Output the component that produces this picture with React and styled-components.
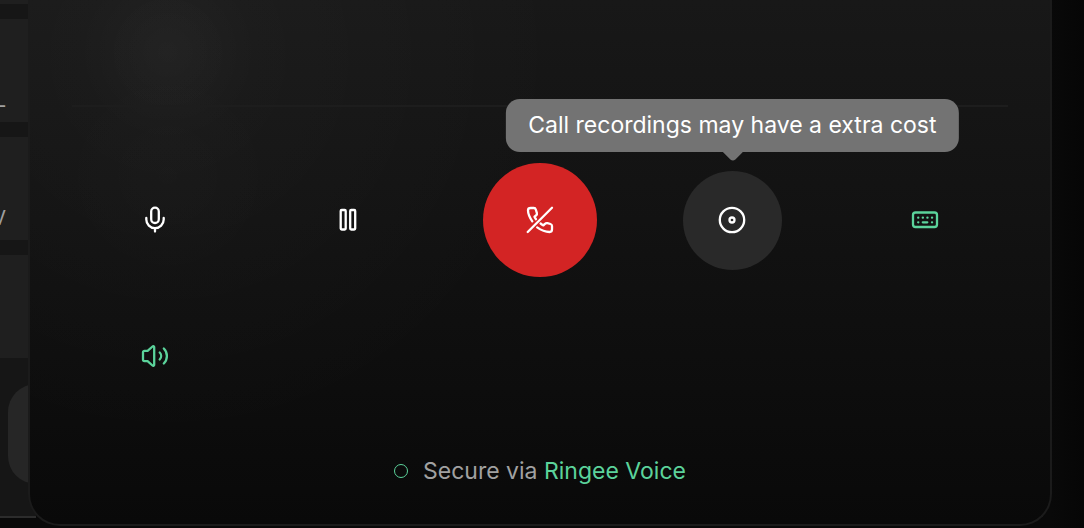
import React from 'react'
import styled, { createGlobalStyle, css } from 'styled-components'

const GlobalStyle = createGlobalStyle`
    * {
        box-sizing: border-box;
    }

    body {
        margin: 0;
        overflow: hidden;
        background-color: #050505;
        color: white;
        font-family: Inter, 'Liberation Sans', sans-serif;
    }
`

const Container = styled.div`
    height: 100vh;
    display: grid;
    grid-template-columns: 28px minmax(0, 1fr) 32px;
    align-items: start;
    overflow: hidden;
    background: linear-gradient(90deg, #090909 97%, #060606);
`

/* runs a little under the dialog so that its rounded corner shows it */
const Sidebar = styled.div`
    width: calc(100% + 8px);
    height: 518px;
    display: flex;
    flex-direction: column;
    gap: 15px;
    overflow: hidden;
    background-color: #161616;
    border-bottom: 2px solid #2c2c2c;

    .strip {
        height: 4px;
        flex-shrink: 0;
        background-color: #1f1f1f;
    }
`

const SidebarRow = styled.div`
    height: 103px;
    flex-shrink: 0;
    display: flex;
    justify-content: flex-end;
    align-items: flex-end;
    padding: 0 30px 10px 0;
    background-color: #1f1f1f;
    color: #a0a0a0;
    font-size: 20px;
    line-height: 24px;
`

const SidebarPill = styled.div`
    width: 100px;
    height: 100px;
    flex-shrink: 0;
    margin: 11px 0 0 8px;
    border-radius: 28px;
    background-color: #262626;
`

const Dialog = styled.main`
    position: relative;
    height: 526px;
    display: flex;
    flex-direction: column;
    border: 2px solid #1b1b1b;
    border-top: none;
    border-radius: 0 0 32px 32px;
    background:
        radial-gradient(circle 90px at 138px 52px, #ffffff07, transparent),
        radial-gradient(circle 110px at 138px 175px, #ffffff03, transparent),
        radial-gradient(circle 400px at 138px 52px, #ffffff07, transparent),
        linear-gradient(#181818, #121212 42%, #090909);

    .divider {
        width: calc(100% - 84px);
        height: 2px;
        margin: 105px auto 0;
        border: none;
        background-color: #1d1d1d;
    }
`

const Controls = styled.div`
    display: grid;
    grid-template-columns: repeat(5, minmax(0, 1fr));
    grid-template-rows: 114px 114px;
    row-gap: 22px;
    place-items: center;
    padding: 56px 29px 0;
`

const variants = {
    plain: css`
        background-color: transparent;
        color: white;
    `,
    accent: css`
        background-color: transparent;
        color: #5bd39b;
    `,
    active: css`
        background-color: #292929;
        color: white;
    `,
    danger: css`
        width: 114px;
        height: 114px;
        background-color: #d32424;
        color: white;
    `,
}

const ControlButton = styled.button`
    width: 99px;
    height: 99px;
    display: flex;
    justify-content: center;
    align-items: center;
    padding: 0;
    border: none;
    border-radius: 50%;
    cursor: pointer;
    ${({ $variant }) => variants[$variant]}

    svg {
        width: 28px;
        height: 28px;
        overflow: visible;
    }
`

const TooltipAnchor = styled.div`
    position: relative;
    display: flex;
`

const Tooltip = styled.div`
    position: absolute;
    bottom: calc(100% + 19px);
    left: 50%;
    transform: translateX(-50%);
    padding: 12px 22px;
    border-radius: 14px;
    background-color: #737373;
    font-size: 23px;
    line-height: 29px;
    white-space: nowrap;

    svg {
        position: absolute;
        top: 100%;
        left: 50%;
        width: 20px;
        height: 9px;
        margin-left: -10px;
        fill: #737373;
    }
`

const Footer = styled.footer`
    display: flex;
    justify-content: center;
    align-items: center;
    gap: 15px;
    margin-top: 42px;
    color: #a1a1a1;
    font-size: 23px;
    line-height: 32px;

    .dot {
        width: 14px;
        height: 14px;
        border: 1px solid #5bd39b;
        border-radius: 50%;
    }

    .brand {
        color: #5bd39b;
    }
`

const Icon = ({ children }) => (
    <svg viewBox="0 0 28 28" fill="none" stroke="currentColor" strokeWidth="2.3" strokeLinecap="round" strokeLinejoin="round" aria-hidden="true">
        {children}
    </svg>
)

const MicIcon = () => (
    <Icon>
        <rect x="10.2" y="1.7" width="7.600" height="15.300" rx="3.800" />
        <path d="M5.300 12v1.500a8.700 8.700 0 0 0 17.400 0V12M14 22.200v3.300" />
    </Icon>
)

const PauseIcon = () => (
    <Icon>
        <rect x="6.700" y="4" width="5" height="19.500" rx="1" />
        <rect x="16.200" y="4" width="5" height="19.500" rx="1" />
    </Icon>
)

const HangUpIcon = () => (
    <Icon>
        <path d="M26 1.700 1.700 26" />
        <path d="M6.300 15.400C3.800 11.800 2 7.700 2 4.300 2 2.800 3.200 2 4.700 2h3.100c1 0 1.700.5 2 1.500l1.100 3.600c.3 1-.1 1.800-.9 2.400l-1.500 1.200c.4 1 .9 1.700 1.500 2.500" />
        <path d="M14.600 17.500c1 .8 1.900 1.500 2.800 1.900l1.500-1.500c.7-.8 1.500-1 2.500-.8l3.100.9c1 .3 1.500 1 1.500 2v3.300c0 1.600-.9 2.700-2.400 2.700-4.100 0-8.600-1.800-12.400-4.600" />
    </Icon>
)

const RecordIcon = () => (
    <Icon>
        <circle cx="14" cy="14" r="12.200" />
        <circle cx="14" cy="14" r="2.500" />
    </Icon>
)

const KeyboardIcon = () => (
    <Icon>
        <rect x="2" y="6.500" width="24" height="14.500" rx="2.500" />
        <path d="M7.200 11.700h.1M11.800 11.700h.1M16.400 11.700h.1M21 11.700h.1M7.200 16.300h.1M11.800 16.300h4.500M21 16.300h.1" />
    </Icon>
)

const SpeakerIcon = () => (
    <Icon>
        <path d="M2 10.200v7.600c0 .8.600 1.300 1.400 1.300h3.200l4.900 4.400c.8.700 1.700.3 1.700-.7V5.200c0-1-.9-1.400-1.700-.7L6.600 8.900H3.400C2.600 8.900 2 9.400 2 10.200z" />
        <path d="M18.700 10.500a5 5 0 0 1 0 7M22.800 6.500a10.600 10.600 0 0 1 0 15" />
    </Icon>
)

export default function App() {
    return (
        <>
            <GlobalStyle />
            <Container>
                <Sidebar>
                    <div className='strip' />
                    <SidebarRow>L</SidebarRow>
                    <SidebarRow>V</SidebarRow>
                    <SidebarRow />
                    <SidebarPill />
                </Sidebar>
                <Dialog>
                    <hr className='divider' />
                    <Controls>
                        <ControlButton $variant='plain' aria-label='Mute'>
                            <MicIcon />
                        </ControlButton>
                        <ControlButton $variant='plain' aria-label='Hold'>
                            <PauseIcon />
                        </ControlButton>
                        <ControlButton $variant='danger' aria-label='Hang up'>
                            <HangUpIcon />
                        </ControlButton>
                        <TooltipAnchor>
                            <ControlButton $variant='active' aria-label='Record' aria-describedby='record-tip'>
                                <RecordIcon />
                            </ControlButton>
                            <Tooltip id='record-tip' role='tooltip'>
                                Call recordings may have a extra cost
                                <svg viewBox="0 0 20 9" aria-hidden="true">
                                    <path d="M0 0h20l-7.500 7.500q-2.500 2-5 0z" />
                                </svg>
                            </Tooltip>
                        </TooltipAnchor>
                        <ControlButton $variant='accent' aria-label='Keypad'>
                            <KeyboardIcon />
                        </ControlButton>
                        <ControlButton $variant='accent' aria-label='Speaker'>
                            <SpeakerIcon />
                        </ControlButton>
                    </Controls>
                    <Footer>
                        <span className='dot' />
                        <span>Secure via <span className='brand'>Ringee Voice</span></span>
                    </Footer>
                </Dialog>
            </Container>
        </>
    )
}
